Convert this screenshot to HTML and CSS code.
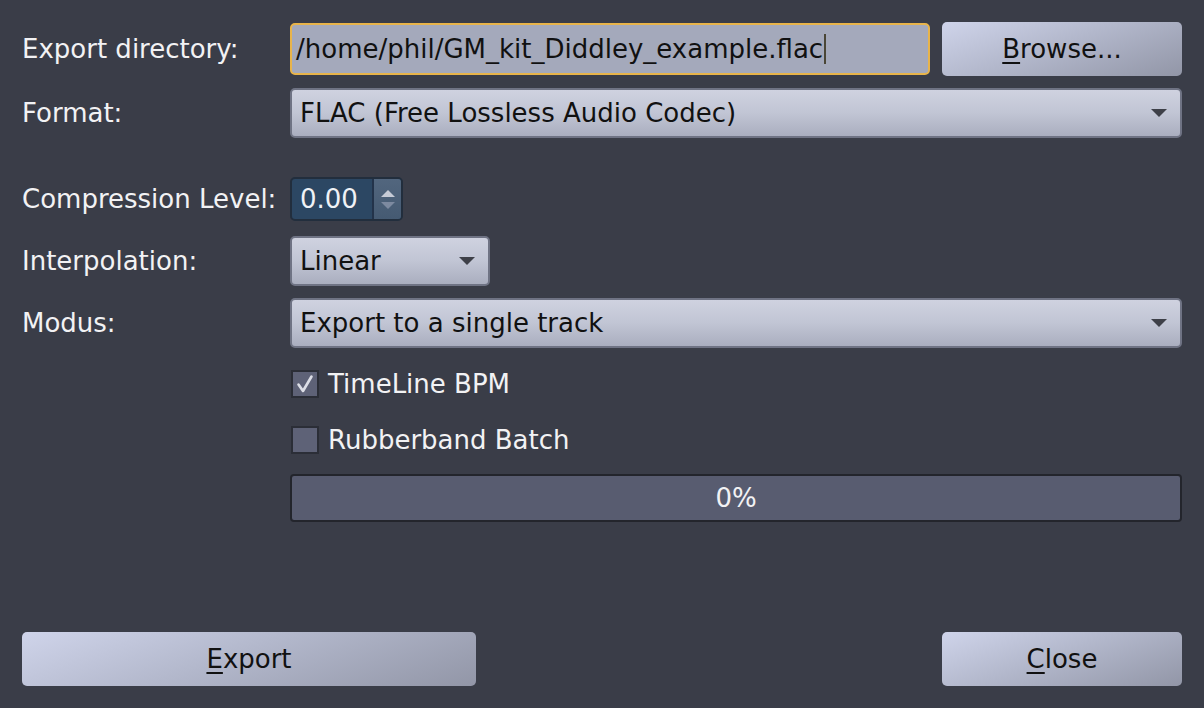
FILE: index.html
```html
<!DOCTYPE html>
<html>
<head>
<meta charset="utf-8">
<link rel="stylesheet" href="styles.css">
</head>
<body>
<div class="dialog">
  <div class="row row-dir">
    <div class="label">Export directory:</div>
    <div class="field-wrap">
      <div class="lineedit"><span>/home/phil/GM_kit_Diddley_example.flac</span><span class="caret"></span></div>
      <div class="button browse"><u>B</u>rowse...</div>
    </div>
  </div>
  <div class="row row-format">
    <div class="label">Format:</div>
    <div class="combo wide"><span>FLAC (Free Lossless Audio Codec)</span><span class="arrow"></span></div>
  </div>
  <div class="row row-comp">
    <div class="label">Compression Level:</div>
    <div class="spin">
      <span class="spin-value">0.00</span>
      <span class="spin-btns"><span class="up"></span><span class="down"></span></span>
    </div>
  </div>
  <div class="row row-interp">
    <div class="label">Interpolation:</div>
    <div class="combo small"><span>Linear</span><span class="arrow"></span></div>
  </div>
  <div class="row row-modus">
    <div class="label">Modus:</div>
    <div class="combo wide"><span>Export to a single track</span><span class="arrow"></span></div>
  </div>
  <div class="row row-check1">
    <div class="label"></div>
    <div class="check"><span class="box checked"><svg width="20" height="20" viewBox="0 0 20 20"><path d="M3.5 10.5 L8 17 L16.5 2.5" fill="none" stroke="#dcdee6" stroke-width="2.6" stroke-linecap="round" stroke-linejoin="round"/></svg></span><span>TimeLine BPM</span></div>
  </div>
  <div class="row row-check2">
    <div class="label"></div>
    <div class="check"><span class="box"></span><span>Rubberband Batch</span></div>
  </div>
  <div class="row row-progress">
    <div class="label"></div>
    <div class="progress">0%</div>
  </div>
  <div class="spacer"></div>
  <div class="bottom">
    <div class="button export"><u>E</u>xport</div>
    <div class="button close"><u>C</u>lose</div>
  </div>
</div>
</body>
</html>
```
FILE: styles.css
```css
html, body {
  margin: 0;
  padding: 0;
  background: #3a3d48;
  width: 1204px;
  height: 708px;
  overflow: hidden;
}
.dialog {
  font-family: "DejaVu Sans", sans-serif;
  font-size: 26px;
  color: #f2f2f4;
  padding: 22px 22px 22px 22px;
  height: 708px;
  box-sizing: border-box;
  display: flex;
  flex-direction: column;
}
.row {
  display: flex;
  align-items: center;
}
.label {
  width: 268px;
  flex: none;
}
.field-wrap {
  display: flex;
  flex: 1;
  gap: 12px;
  align-items: center;
}
.row-dir { height: 54px; }
.lineedit {
  flex: 1;
  height: 52px;
  box-sizing: border-box;
  border: 2px solid #e8b44a;
  border-radius: 5px;
  background: #a4a9bb;
  color: #111;
  display: flex;
  align-items: center;
  padding-left: 4px;
}
.caret {
  display: inline-block;
  width: 2px;
  height: 30px;
  background: #4a4636;
  margin-left: 1px;
}
.button {
  height: 54px;
  box-sizing: border-box;
  border-radius: 5px;
  background: linear-gradient(160deg, #cfd4ea 0%, #b3b8cc 45%, #9296a7 100%);
  color: #111;
  display: flex;
  align-items: center;
  justify-content: center;
}
.browse { width: 240px; }
.combo {
  height: 50px;
  box-sizing: border-box;
  border: 2px solid #6f7384;
  border-radius: 5px;
  background: linear-gradient(180deg, #cfd2e0 0%, #c1c5d4 50%, #aaaebf 100%);
  color: #111;
  display: flex;
  align-items: center;
  justify-content: space-between;
  padding: 0 10px 0 8px;
}
.combo.wide { flex: 1; }
.combo.small { width: 200px; }
.arrow {
  width: 0;
  height: 0;
  border-left: 8px solid transparent;
  border-right: 8px solid transparent;
  border-top: 8px solid #3e4048;
  margin-right: 3px;
}
.row-format { margin-top: 12px; height: 50px; }
.row-comp { margin-top: 39px; height: 44px; }
.spin {
  width: 113px;
  height: 44px;
  box-sizing: border-box;
  border: 2px solid #222e3d;
  border-radius: 5px;
  background: #2c4763;
  display: flex;
  overflow: hidden;
}
.spin-value {
  flex: 1;
  display: flex;
  align-items: center;
  padding-left: 8px;
  color: #f0f2f6;
}
.spin-btns {
  width: 27px;
  background: linear-gradient(180deg, #52667e, #455a72);
  border-left: 2px solid #23334a;
  display: flex;
  flex-direction: column;
  align-items: center;
  justify-content: center;
  gap: 5px;
}
.up {
  width: 0; height: 0;
  border-left: 7px solid transparent;
  border-right: 7px solid transparent;
  border-bottom: 7px solid #c6cbd6;
}
.down {
  width: 0; height: 0;
  border-left: 7px solid transparent;
  border-right: 7px solid transparent;
  border-top: 7px solid #7d8aa0;
}
.row-interp { margin-top: 15px; height: 49px; }
.row-modus { margin-top: 13px; height: 50px; }
.row-check1 { margin-top: 16px; height: 40px; }
.row-check2 { margin-top: 16px; height: 40px; }
.check {
  display: flex;
  align-items: center;
  gap: 9px;
}
.box {
  width: 28px;
  height: 28px;
  box-sizing: border-box;
  border: 2px solid #2b2e37;
  background: #5e6277;
  display: flex;
  align-items: center;
  justify-content: center;
  margin-left: 1px;
}
.row-progress { margin-top: 14px; height: 48px; }
.progress {
  flex: 1;
  height: 48px;
  box-sizing: border-box;
  border: 2px solid #23252c;
  border-radius: 4px;
  background: #585c70;
  display: flex;
  align-items: center;
  justify-content: center;
  color: #f2f2f4;
}
.spacer { flex: 1; }
.bottom {
  display: flex;
  justify-content: space-between;
}
.export { width: 454px; }
.close { width: 240px; }
u { text-underline-offset: 4px; text-decoration-thickness: 2px; }
```
